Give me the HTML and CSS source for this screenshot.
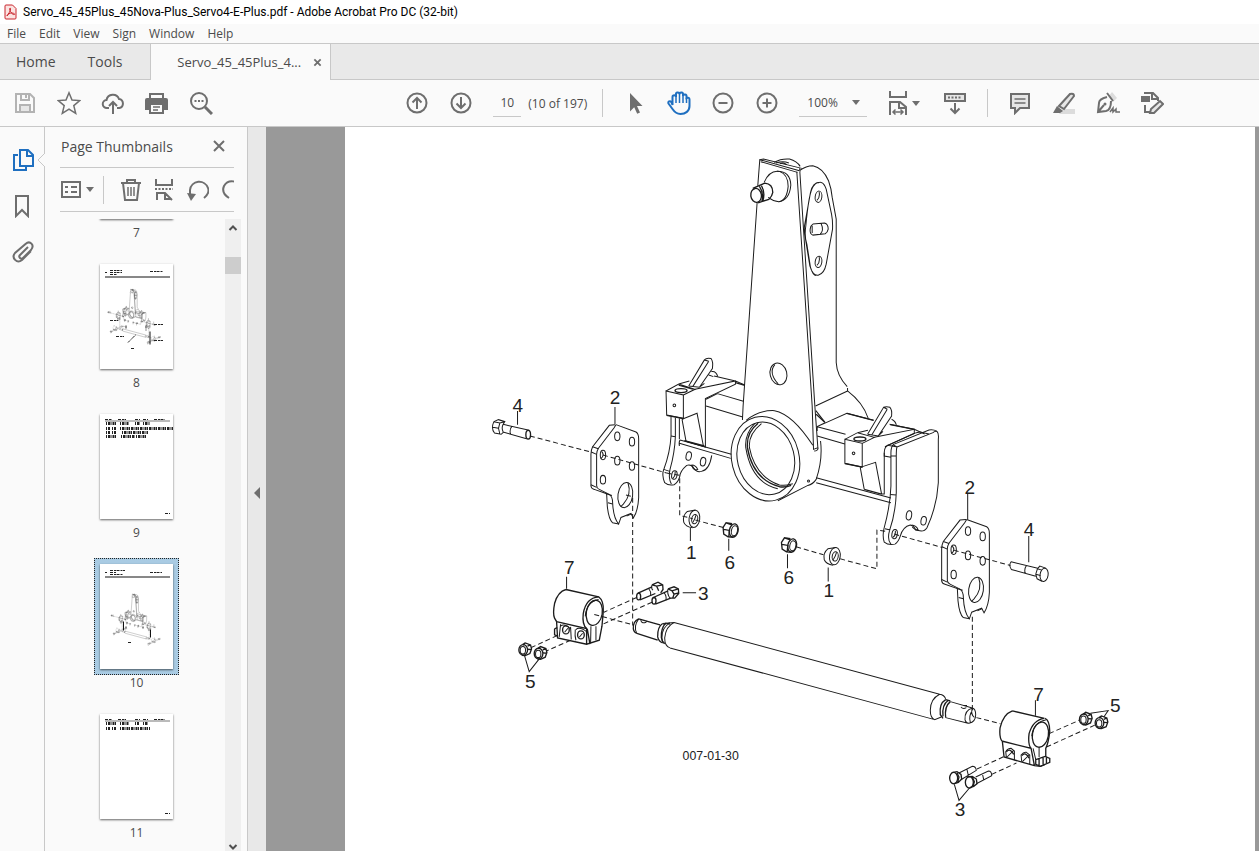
FILE: index.html
```html
<!DOCTYPE html>
<html lang="en">
<head>
  <meta charset="UTF-8">
  <title>Servo_45_45Plus_45Nova-Plus_Servo4-E-Plus.pdf - Adobe Acrobat Pro DC (32-bit)</title>
  <link rel="stylesheet" href="styles.css">
</head>
<body>
  <header class="titlebar">
    <svg class="app-icon" viewBox="0 0 13 16">
      <path class="app-sheet" d="M2 1h6.500l3.500 3.500V14a1 1 0 0 1-1 1H2a1 1 0 0 1-1-1V2a1 1 0 0 1 1-1z"/>
      <path d="M3 12c1-2 4-5 3.500-7.500C6 3 5 5 6.500 7.500S9.500 11 10.500 10.500 9 8.500 6.500 9.200 3.200 11 3 12z"/>
    </svg>
    <span>Servo_45_45Plus_45Nova-Plus_Servo4-E-Plus.pdf - Adobe Acrobat Pro DC (32-bit)</span>
  </header>

  <nav class="menubar">
    <button>File</button>
    <button>Edit</button>
    <button>View</button>
    <button>Sign</button>
    <button>Window</button>
    <button>Help</button>
  </nav>

  <nav class="tabs">
    <button class="tab tab-home">Home</button>
    <button class="tab tab-tools">Tools</button>
    <div class="tab-doc">
      <button class="tab tab-name">Servo_45_45Plus_4...</button>
      <button class="tab-close" aria-label="Close tab">
        <svg viewBox="0 0 10 10"><path d="M1.500 1.500l7 7M8.500 1.500l-7 7"/></svg>
      </button>
    </div>
  </nav>

  <div class="toolbar">
    <div class="group">
      <button class="tool disabled" aria-label="Save">
        <svg viewBox="0 0 24 24"><path d="M3 3h14l4 4v14H3z"/><path d="M8 3v6h8V3M13 4v3"/><path class="tint" d="M7 21v-7h10v7z"/></svg>
      </button>
      <button class="tool" aria-label="Star">
        <svg viewBox="0 0 24 24"><path class="thin" d="M12 1.800l3 7.200 7.800.6-6 5 1.900 7.700-6.700-4.200-6.700 4.200 1.900-7.700-6-5L9 9z"/></svg>
      </button>
      <button class="tool" aria-label="Upload">
        <svg viewBox="0 0 24 24"><path d="M8 17H6a4 4 0 0 1-.5-8 6.500 6.500 0 0 1 12.500-1 4.600 4.600 0 0 1 .5 9H16"/><path d="M12 23V11M8 15l4-4 4 4"/></svg>
      </button>
      <button class="tool" aria-label="Print">
        <svg viewBox="0 0 24 24"><path d="M5 8V3h13v5"/><path class="solid" d="M2 8h19a1 1 0 0 1 1 1v9h-4v-5H5v5H1V9a1 1 0 0 1 1-1z"/><path d="M5 13v9h13v-9"/><path class="thin" d="M8 16h7M8 19h5"/></svg>
      </button>
      <button class="tool" aria-label="Find">
        <svg viewBox="0 0 24 24"><circle cx="10" cy="10" r="8"/><path class="thick" d="M16 16l7 7"/><path class="dots" d="M5.500 10h9"/></svg>
      </button>
    </div>
    <div class="group main-tools">
      <button class="tool" aria-label="Previous page">
        <svg viewBox="0 0 24 24"><circle cx="12" cy="12" r="9.500"/><path d="M12 18V7M7.500 11.500L12 7l4.500 4.500"/></svg>
      </button>
      <button class="tool" aria-label="Next page">
        <svg viewBox="0 0 24 24"><circle cx="12" cy="12" r="9.500"/><path d="M12 6v11M7.500 12.500L12 17l4.500-4.500"/></svg>
      </button>
      <input class="page-number" type="text" value="10" aria-label="Page number">
      <span class="page-count">(10 of 197)</span>
      <span class="divider"></span>
      <button class="tool" aria-label="Select">
        <svg viewBox="0 0 24 24"><path class="solid-only" d="M7 2v18.500l4.200-4.300 3 6.500 2.800-1.300-3-6.400h5.500z"/></svg>
      </button>
      <button class="tool active" aria-label="Hand">
        <svg viewBox="0 0 24 24"><path d="M5.500 14V6a1.700 1.700 0 0 1 3.500 0V3.500a1.700 1.700 0 0 1 3.500-.5 1.700 1.700 0 0 1 3.500.5V5a1.700 1.700 0 0 1 3.500.5V7q3-1 3 1.500V15c0 5-4 8-9 8-4 0-6-2-8-5l-4-5.500c-1-2 1.500-3 2.800-1.500z"/><path class="thin" d="M9 6v6M12.500 3v9M16 5v7M19.500 7v5"/></svg>
      </button>
      <button class="tool" aria-label="Zoom out">
        <svg viewBox="0 0 24 24"><circle cx="12" cy="12" r="9.500"/><path d="M7.500 12h9"/></svg>
      </button>
      <button class="tool" aria-label="Zoom in">
        <svg viewBox="0 0 24 24"><circle cx="12" cy="12" r="9.500"/><path d="M7.500 12h9M12 7.500v9"/></svg>
      </button>
      <label class="zoom">
        <select aria-label="Zoom level"><option>100%</option><option>150%</option></select>
        <svg class="caret" viewBox="0 0 8 5"><path d="M0 0h8L4 5z"/></svg>
      </label>
      <button class="tool with-caret" aria-label="Page width">
        <svg viewBox="0 0 24 24"><path d="M4 0v6h16V0"/><path d="M4 24V11h10l6 5v8M13 11v6h6"/><path class="thin" d="M7 21h10M9.500 18.500L7 21l2.500 2.500M14.500 18.500L17 21l-2.500 2.500"/></svg>
        <svg class="caret" viewBox="0 0 8 5"><path d="M0 0h8L4 5z"/></svg>
      </button>
      <button class="tool" aria-label="Scrolling">
        <svg viewBox="0 0 24 24"><path class="tint" d="M2 3h20v7H2z"/><path class="dots" d="M5 6.500h14"/><path d="M12 12v10M7.500 17.500L12 22l4.500-4.500"/></svg>
      </button>
      <span class="divider"></span>
      <button class="tool" aria-label="Comment">
        <svg viewBox="0 0 24 24"><path class="tint" d="M3 3h18v14h-9l-5 5v-5H3z"/><path class="thin" d="M6.500 8h11M6.500 12h11"/></svg>
      </button>
      <button class="tool" aria-label="Highlight">
        <svg viewBox="0 0 24 24"><path class="shade" d="M10 18h13v5H7z"/><path class="tint" d="M7 15L18 3q4-1 4 2L12 18z"/><path class="solid-only" d="M5 15l6 5-3 2H1z"/></svg>
      </button>
      <button class="tool" aria-label="Sign">
        <svg viewBox="0 0 24 24"><path class="shade" d="M13 5l3-4 5 6-4 4z"/><path d="M11 2l6 8M11 6q-8 2-8 6L2 21l8-1q5-1 5-10M2 21l6-7"/><circle class="solid-only" cx="9" cy="13" r="1.500"/><path class="thin" d="M14 21l3-4v4l3-3v3h4"/></svg>
      </button>
      <button class="tool" aria-label="Edit PDF">
        <svg viewBox="0 0 24 24"><path d="M5 14v7h5M5 3V2h8l5 5v3M12 2v6h6"/><path class="solid" d="M2 6h7v4H2z"/><path class="tint" d="M10 22l1-4 9-8 3 3-9 9z"/></svg>
      </button>
    </div>
  </div>

  <main class="workspace">
    <aside class="rail">
      <button class="rail-button active" aria-label="Page Thumbnails">
        <svg viewBox="0 0 24 24"><path d="M9 2h8l5 5v11H9zM16 2v6h6"/><path d="M7 7H3v15h12v-3"/></svg>
      </button>
      <button class="rail-button" aria-label="Bookmarks">
        <svg viewBox="0 0 24 24"><path d="M5 2h12v20l-6-6-6 6z"/></svg>
      </button>
      <button class="rail-button" aria-label="Attachments">
        <svg viewBox="0 0 24 24"><path d="M17 7l-8 8a1.800 1.800 0 0 0 3 3l8-8c4-5-1-10-5.500-6L4 13c-4 5 2 11 7 7l9-9"/></svg>
      </button>
    </aside>

    <section class="panel">
      <svg class="pointer" viewBox="0 0 8 14"><path class="pointer-fill" d="M8 0L1 7l7 7"/></svg>
      <div class="panel-head">
        <h2>Page Thumbnails</h2>
        <button class="panel-close" aria-label="Close panel">
          <svg viewBox="0 0 12 12"><path d="M1 1l10 10M11 1L1 11"/></svg>
        </button>
      </div>
      <div class="panel-tools">
        <button class="small-tool options" aria-label="Options">
          <svg viewBox="0 0 24 24"><path d="M2 4h18v15H2z"/><path d="M5 9h3M5 14h3M11 9h6M11 14h6"/></svg>
          <svg class="caret" viewBox="0 0 8 5"><path d="M0 0h8L4 5z"/></svg>
        </button>
        <span class="divider"></span>
        <button class="small-tool" aria-label="Delete pages">
          <svg viewBox="0 0 24 24"><path d="M2 5h20M8 5V2h8v3M4 5l2 17h12l2-17"/><path class="thin" d="M9 9v9M12 9v9M15 9v9"/></svg>
        </button>
        <button class="small-tool" aria-label="Split pages">
          <svg viewBox="0 0 24 24"><path d="M4 1v6h16V1"/><path class="dots" d="M3 11h18"/><path d="M5 22v-7h8l7 7M13 15v6h6"/></svg>
        </button>
        <button class="small-tool" aria-label="Rotate left">
          <svg viewBox="0 0 24 24"><path d="M19 20q6-5 4-10a9.300 9.300 0 0 0-18 2v6"/><path class="solid-only" d="M2 15l9 1-5 7z"/></svg>
        </button>
        <button class="small-tool" aria-label="Rotate right">
          <svg viewBox="0 0 24 24"><path d="M11 20q-8-5-5-12a9.300 9.300 0 0 1 17 2v7"/></svg>
        </button>
      </div>
      <div class="panel-body">
        <ul class="thumbs">
          <li>
            <button class="thumb"><svg viewBox="0 0 73 104"></svg></button>
            <span>7</span>
          </li>
          <li>
            <button class="thumb">
              <svg viewBox="0 0 73 104">
                <path class="rule" d="M5 12.500h65"/>
                <path class="scribble" d="M5 8h2M10 6h12M10 8h12M10 10h7M50 7h13"/>
                <use class="mini" href="#lift" x="-5" y="22" width="78" height="62"/>
                <path class="scribble" d="M10 56h8M54 60h9M16 72h8M54 76h9M31 84h4M28 78l8-8M26 61v4M46 61v5"/>
                <path class="rule" d="M50 67v13"/>
              </svg>
            </button>
            <span>8</span>
          </li>
          <li>
            <button class="thumb">
              <svg viewBox="0 0 73 104">
                <path class="hair" d="M5 6.500h65"/>
                <path class="scribble" d="M5 5h7M18 5h8M35 5h5M43 5h5M54 5h11"/>
                <path class="scribble tall" d="M6 9h10M20 9h9M35 9h5M43 9h7M6 14h4M12 14h4M20 14h58M6 18h4M12 18h4M22 18h26M6 22h10M21 22h14M36 22h11"/>
                <path class="scribble" d="M65 99h5"/>
              </svg>
            </button>
            <span>9</span>
          </li>
          <li>
            <button class="thumb selected">
              <svg viewBox="0 0 73 104">
                <path class="rule" d="M5 12.500h65"/>
                <path class="scribble" d="M5 8h2M10 6h15M10 8h6M10 10h13M50 8h12"/>
                <use class="mini" href="#lift" x="-1" y="27" width="73" height="58"/>
                <path class="rule" d="M23.500 57v9M50.500 65v8"/>
                <path class="scribble" d="M28 78h4M26 62v2M43 62v2"/>
              </svg>
            </button>
            <span>10</span>
          </li>
          <li>
            <button class="thumb">
              <svg viewBox="0 0 73 104">
                <path class="hair" d="M5 6.500h65"/>
                <path class="scribble" d="M5 5h7M18 5h8M35 5h5M43 5h5M54 5h11"/>
                <path class="scribble tall" d="M6 9h10M20 9h9M35 9h4M43 9h5M6 14h4M12 14h4M20 14h30"/>
                <path class="scribble" d="M65 99h5"/>
              </svg>
            </button>
            <span>11</span>
          </li>
        </ul>
        <div class="scrollbar">
          <svg class="arrow" viewBox="0 0 16 18"><path d="M4.500 11L8 7.500l3.500 3.500"/></svg>
          <div class="scroll-track"><div class="scroll-thumb"></div></div>
          <svg class="arrow" viewBox="0 0 16 18"><path d="M4.500 12L8 15.500l3.500-3.500"/></svg>
        </div>
      </div>
    </section>

    <button class="collapse" aria-label="Collapse panel">
      <svg viewBox="0 0 6 12"><path d="M6 0v12L0 6z"/></svg>
    </button>

    <section class="document">
      <article class="sheet">
        <svg class="drawing" viewBox="3 3 2727 2172">
          <defs>
            <g id="plate">
              <path d="M408 136L390 138L340 202Q335 212 335 225V320Q336 328 345 330L382 343L384 380Q388 420 400 430L418 434"/>
              <path d="M410 136L470 158Q478 163 478 178V355Q476 395 462 416L455 402L425 414L418 434Q402 415 400 370Q400 352 390 345L360 330Q352 326 352 318V225Q352 215 358 206L404 146L410 136"/>
              <path d="M336 218L352 225M340 202L357 208M335 316L352 324M380 343L398 348M386 370L400 374M442 410L455 404"/>
              <ellipse cx="414" cy="171" rx="8" ry="13"/><ellipse cx="458" cy="187" rx="8" ry="13"/>
              <ellipse cx="371" cy="227" rx="8" ry="14"/><ellipse cx="414" cy="244" rx="8" ry="13"/>
              <ellipse cx="458" cy="260" rx="8" ry="13"/><ellipse cx="371" cy="301" rx="8" ry="13"/>
              <ellipse cx="438" cy="347" rx="22" ry="38" transform="rotate(8 438 347)"/>
              <path d="M446 310Q458 345 432 374L424 382M367 216q10 11-2 22"/>
            </g>
            <g id="spacer">
              <path d="M648 392L624 396Q609 408 613 428Q618 442 640 445"/>
              <ellipse cx="645" cy="418" rx="16" ry="26" transform="rotate(8 645 418)"/>
              <ellipse cx="646" cy="419" rx="9" ry="14" transform="rotate(10 646 419)"/>
              <path d="M650 407q-3 12-10 22"/>
            </g>
            <g id="locknut">
              <path class="bold" d="M758 433L740 430L731 444L733 464L746 472L762 474M740 430L757 436M733 450L750 453L748 472"/>
              <ellipse class="bold" cx="763" cy="453" rx="13" ry="20" transform="rotate(12 763 453)"/>
              <ellipse cx="765" cy="454" rx="9" ry="15" transform="rotate(12 765 454)"/>
            </g>
            <g id="smallnut">
              <path class="bold" d="M12 5L20 0L36 6L39 18L34 32L20 38L10 37M20 0l-6 7M36 6l-9 4M39 20l-12-1"/>
              <ellipse class="bold" cx="14" cy="21" rx="13" ry="16"/><ellipse cx="13" cy="22" rx="8" ry="11"/>
            </g>
          </defs>

          <symbol id="lift" viewBox="0 0 2727 2172">
            <!-- tower -->
            <g transform="translate(885 69)">
              <path d="M353 160L311 770M355 110L361 32L480 65M364 38L474 70M361 32L372 30L487 58"/>
              <path d="M404 40Q425 28 450 30Q472 36 482 52M410 42Q430 34 448 42M422 44q10-6 20 3"/>
              <path d="M472 68L518 770M481 68L526 770M480 58L482 68M480 65Q500 50 520 50Q550 56 567 95Q576 120 578 145L590 210V640Q592 680 623 712"/>
              <path d="M545 100Q520 98 513 130L495 230Q493 250 498 270L511 350Q520 380 536 378Q554 374 560 345L579 240Q580 215 576 195L560 120Q554 102 545 100M539 101Q530 98 521 112Q508 130 499 230Q494 260 502 285L513 355Q521 380 530 379"/>
              <ellipse cx="537" cy="143" rx="10" ry="17" transform="rotate(8 537 143)"/><ellipse cx="537" cy="338" rx="10" ry="17" transform="rotate(8 537 338)"/>
              <path d="M532 154q10-8 7-25M532 349q10-8 7-25"/>
              <path d="M520 225L555 222Q566 225 566 240Q564 250 557 254L520 258Q510 254 512 240Q513 229 520 225M518 230V252M545 224q9 20-3 31"/>
              <path d="M374 100Q390 62 420 67Q446 76 446 112Q442 155 418 158Q402 157 386 145"/>
              <path d="M412 67Q452 66 454 108Q450 154 418 158"/>
              <path class="bold" d="M340 118L376 102Q400 104 400 130Q398 142 388 151L356 161M366 110Q378 130 370 157M360 112q14 20 7 46"/>
              <ellipse class="bold" cx="350" cy="139" rx="16" ry="21" transform="rotate(-8 350 139)"/>
              <ellipse cx="417" cy="674" rx="25" ry="33" transform="rotate(-14 417 674)"/>
              <path d="M406 646Q386 670 416 704"/>
            </g>

            <!-- cross beam, hub and brackets -->
            <g transform="translate(915 639)">
              <path d="M281 200L279 242M488 200L492 330L505 325L496 200M494 335Q505 335 506 325"/>
              <path d="M498 200L594 155M594 146V155Q640 190 656 237M499 214L527 250"/>
              <!-- hub -->
              <ellipse cx="348" cy="358" rx="101" ry="128" transform="rotate(-14 348 358)"/>
              <ellipse cx="349" cy="357" rx="85" ry="110" transform="rotate(-14 349 357)"/>
              <path class="bold" d="M326 252Q290 280 294 325Q310 420 390 442Q408 445 425 438"/>
              <path d="M336 253Q296 285 300 325Q316 410 390 437Q408 440 430 433M316 252Q285 285 289 325Q306 430 385 448"/>
              <path d="M290 243Q330 212 375 214Q430 225 490 318M513 305Q520 360 500 420Q490 435 475 438L385 484"/>
              <circle cx="477" cy="425" r="3"/>
              <!-- left block and lever -->
              <path d="M50 155L102 167V237L52 227ZM50 155L88 134L137 150L102 167M88 134L120 125M88 138L130 150"/>
              <ellipse class="bold" cx="95" cy="154" rx="18" ry="6"/><circle cx="75" cy="198" r="4"/>
              <path d="M118 140L165 62Q172 54 185 58Q192 68 189 88L150 144M130 142L178 66M118 140L150 144L165 132M165 62L178 66M186 97Q200 94 205 112M178 107L192 112"/>
              <path d="M137 150L258 125V135L168 178V323L107 305M194 110L258 125L286 137M102 237L98 240M90 237V300"/>
              <path class="bold" d="M52 228L102 238M105 304L165 320M258 130L286 138"/>
              <path d="M98 240L143 222L162 320M98 240L110 306"/>
              <path d="M204 163L282 186M170 180L204 163M170 200L280 233M92 302L246 345M90 312L244 357M92 302Q88 307 90 320"/>
              <path d="M65 232V290Q62 340 44 388Q36 405 46 430Q58 440 74 436Q86 430 91 412Q92 395 112 378Q126 374 133 386Q142 400 156 396Q180 392 187 348"/>
              <path d="M78 236V292Q76 340 62 390Q56 415 66 434M65 290L78 292M43 390L61 396M126 377Q138 376 145 390L138 392Q130 388 126 377"/>
              <ellipse cx="118" cy="350" rx="8" ry="13" transform="rotate(10 118 350)"/><ellipse cx="161" cy="367" rx="8" ry="13" transform="rotate(10 161 367)"/><ellipse cx="75" cy="407" rx="8" ry="13" transform="rotate(10 75 407)"/>
              <!-- right beam, block and lever -->
              <path d="M503 262L592 222L672 243M503 262L588 285M503 290L586 314M500 415L724 476M500 430L724 490M527 250L503 262V275"/>
              <path d="M586 300L638 312V383L586 372ZM586 300L624 280L674 294L638 312M624 280L655 273"/>
              <ellipse class="bold" cx="631" cy="299" rx="18" ry="6"/><circle cx="612" cy="342" r="4"/>
              <path d="M654 285L702 204Q710 200 721 204Q728 212 726 230L686 290M666 288L713 210M702 204L713 210M654 285L686 290L700 276M726 240Q738 246 740 257"/>
              <path class="bold" d="M586 373L638 383M696 464L644 450M592 222L672 243M500 225L525 248M722 256L794 270"/>
              <path d="M632 384L678 369L696 464M644 450L632 384"/>
              <path d="M674 294L794 270V282L706 322M720 255L794 270L825 284M704 340V464L696 464"/>
              <!-- end plates -->
              <path d="M740 322L714 318Q704 324 704 340V350L724 354M714 318L800 280L812 278M732 315L838 272Q852 270 862 276Q868 282 866 300V430Q862 500 832 565Q826 575 815 575L798 572Q795 560 782 557Q760 562 752 590Q746 608 736 614Q716 618 704 608Q698 590 703 568Q722 500 724 440V340Q724 322 732 315"/>
              <path d="M742 323Q740 330 740 350V460Q738 520 720 573Q712 600 724 614M742 323L850 280Q856 274 862 276M724 350H740M722 465L740 467M706 568L722 572M786 557Q800 558 806 572Q796 572 788 563M730 316L742 323M812 278L838 284"/>
              <ellipse cx="778" cy="528" rx="8" ry="14" transform="rotate(10 778 528)"/><ellipse cx="822" cy="544" rx="8" ry="13" transform="rotate(10 822 544)"/><ellipse cx="735" cy="584" rx="8" ry="14" transform="rotate(10 735 584)"/>
              <path d="M70 418q9-8 7-22M730 594q9-6 7-20"/>
            </g>

            <use href="#plate" x="405" y="759"/>
            <use href="#plate" x="1456" y="1043"/>
            <use href="#spacer" x="405" y="759"/>
            <use href="#spacer" x="826" y="871"/>
            <use href="#locknut" x="405" y="759"/>
            <use href="#locknut" x="580" y="804"/>

            <!-- bolt 4, left -->
            <g transform="translate(405 759)">
              <path d="M44 127L58 121L77 127L72 135M44 127Q35 148 46 161L66 165L74 158M44 127L62 131L77 127M62 131L58 147L62 164M41 144L58 147M72 135Q66 146 72 158M72 135L150 153M74 159L142 178M98 141Q90 150 94 165"/>
              <ellipse class="bold" cx="147" cy="166" rx="7" ry="13"/>
              <path class="dash" d="M152 170L335 218M371 227L562 281"/>
              <path class="dash" d="M562 281L601 288V408L640 418M648 422L735 445M440 347L460 352V510"/>
              <path d="M115 95V136M407 83V134M633 446V485M748 478V514"/>
            </g>
            <!-- bolt 4, right -->
            <g transform="translate(1245 999)">
              <path d="M754 307Q746 318 755 330L828 350M754 307L834 326M800 318Q792 330 797 342M858 326L840 320L833 328L828 344L832 358L848 366M833 328L846 332M828 344L842 348"/>
              <ellipse cx="853" cy="346" rx="12" ry="20" transform="rotate(8 853 346)"/>
              <path class="dash" d="M110 262L192 286M242 298L352 328V212L378 216M404 224L548 264M582 272L752 318M638 472V760"/>
              <path d="M624 104V180M807 230V308M84 284V326M206 324V366"/>
            </g>

            <!-- clamp 7, bolts 3 and nuts 5, left -->
            <g transform="translate(465 1269)">
              <path class="bold" d="M200 120L298 142Q314 154 312 186L308 230M200 120Q176 126 166 162Q160 192 166 206L172 216L175 265L262 284L300 272L308 230M172 216L262 237L262 284M264 238L272 284"/>
              <ellipse class="bold" cx="285" cy="190" rx="24" ry="38" transform="rotate(10 285 190)"/>
              <path class="bold" d="M298 142Q260 145 252 192Q248 225 262 237M166 238L174 234M166 238V256L176 260"/>
              <path d="M298 150Q262 156 258 200M275 230L274 280M290 230V272M184 224L180 262M214 232L216 270M228 240Q226 260 230 272M230 240Q240 230 262 246M184 230Q194 220 214 238"/>
              <ellipse class="bold" cx="200" cy="241" rx="10" ry="12"/><ellipse class="bold" cx="245" cy="256" rx="10" ry="12"/>
              <path d="M196 248l10-12M240 263l10-12"/>
              <path class="bold" d="M416 131L458 112M422 151L468 132M458 106L476 98L490 106L491 120L484 130M458 106L472 110L490 106M472 110L478 124"/>
              <path class="bold" d="M462 144L506 124M468 164L514 146M506 118L524 112L537 118L538 132L526 146L512 146M506 118L518 124L537 118M518 124L524 134L520 146M524 134L538 130"/>
              <ellipse class="bold" cx="418" cy="141" rx="6" ry="10"/><ellipse class="bold" cx="464" cy="154" rx="6" ry="10"/>
              <path d="M448 117q8 10 6 20M494 130q8 8 6 22M506 118q-4 14 6 28M458 106q-3 12 3 16"/>
              <path class="dash" d="M412 144L314 188M458 158L306 226M285 195L402 226M174 258L96 294M214 272L142 304M400 0V228"/>
              <path d="M202 82V118M550 130H590M76 318L90 366L120 328"/>
              <use href="#smallnut" x="58" y="280"/><use href="#smallnut" x="104" y="291"/>
              <!-- shaft end -->
              <path class="bold" d="M418 208Q400 216 402 238Q404 250 415 252L475 272M418 208L482 226M490 222Q474 232 475 262Q478 276 490 280M500 220Q484 236 486 264Q488 276 496 282"/>
              <path d="M418 208Q402 230 412 250M424 210q2 14 16 8l2-4M490 222L525 219M500 220L512 224"/>
            </g>

            <!-- shaft -->
            <g transform="translate(885 1419)">
              <path d="M104 69L900 284M92 145L885 360M104 69Q80 80 76 115Q76 140 92 145M92 70Q68 84 68 112Q66 128 76 133M72 75L92 70M900 284Q872 298 872 332Q872 356 885 360L905 352M900 284Q914 286 918 298"/>
              <path class="bold" d="M918 300Q898 312 902 345L910 356M926 302Q906 316 910 350M932 306Q914 320 918 354M918 300L932 304"/>
              <path d="M932 306L998 325M918 354L985 371M998 325Q974 332 976 360Q978 370 988 371Q1008 366 1008 345Q1008 328 998 325M998 332Q986 350 992 368M964 322q6 8 16 2M968 318h14M998 325q-6 20 6 28"/>
            </g>

            <!-- clamp 7, bolts 3 and nuts 5, right -->
            <g transform="translate(1725 1629)">
              <path class="bold" d="M278 124L374 146M278 124Q250 134 241 175Q238 205 248 216L253 262L344 288L362 290L376 284M246 214L334 236L344 288M376 146Q390 152 390 186Q386 220 378 236V262M374 146Q340 150 328 192Q324 225 334 236"/>
              <ellipse class="bold" cx="362" cy="195" rx="24" ry="38" transform="rotate(10 362 195)"/>
              <path d="M378 151Q340 158 336 200M340 236L348 270M358 234V262M260 264L258 246Q264 236 274 236L284 244V272M306 276L304 256Q312 246 320 248L330 256V284M262 262l20-20M308 276l20-20"/>
              <path class="bold" d="M348 270L376 260L390 266V278L362 290L348 284ZM358 268V288M370 264V284M380 262V280M260 246q12-12 22 8M306 258q12-14 22 8"/>
              <path class="bold" d="M96 309L112 306L124 314L126 328L116 338L104 342M112 310L118 322L114 338M142 322L158 320L170 328L172 342L162 350L150 354M158 322L164 336L160 350"/>
              <ellipse class="bold" cx="102" cy="325" rx="12" ry="17"/><ellipse class="bold" cx="149" cy="338" rx="12" ry="17"/>
              <path d="M118 310L158 290Q168 290 170 302L124 330M168 322L206 304Q216 304 216 318L170 342M142 300l4 18M188 312l4 18"/>
              <path class="dash" d="M172 298L254 260M216 314L290 280M388 192L478 152M380 232L526 166M170 144L242 162"/>
              <path d="M347 92V138M104 344L118 392L150 354M512 131L565 123L552 142"/>
              <use href="#smallnut" x="478" y="128"/><use href="#smallnut" x="525" y="139"/>
            </g>
          </symbol>
          <use href="#lift" width="2727" height="2172"/>

          <g class="callouts">
            <text x="521" y="856">4</text>
            <text x="812" y="834">2</text>
            <text x="1041" y="1299">1</text>
            <text x="1156" y="1329">6</text>
            <text x="675" y="1344">7</text>
            <text x="1077" y="1420">3</text>
            <text x="558" y="1683">5</text>
            <text x="1333" y="1373">6</text>
            <text x="1453" y="1413">1</text>
            <text x="1875" y="1102">2</text>
            <text x="2053" y="1228">4</text>
            <text x="2081" y="1722">7</text>
            <text x="2311" y="1755">5</text>
            <text x="1846" y="2069">3</text>
            <text class="figure-number" x="1099" y="1899">007-01-30</text>
          </g>
        </svg>
      </article>
    </section>
  </main>
</body>
</html>
```
FILE: styles.css
```css
* {
  box-sizing: border-box;
}

body {
  margin: 0;
  height: 100vh;
  display: flex;
  flex-direction: column;
  overflow: hidden;
  background: #fafafa;
  color: #4b4b4b;
  font-family: "Open Sans", "Noto Sans", sans-serif;
  font-size: 12px;
}

button,
input,
select {
  font: inherit;
  color: inherit;
  border: 0;
  margin: 0;
  padding: 0;
  background: none;
}

svg {
  display: block;
  fill: none;
  stroke: #6e6e6e;
  stroke-width: 2;
}

/* title and menu */
.titlebar {
  height: 24px;
  padding-left: 4px;
  display: flex;
  align-items: center;
  gap: 6px;
  background: #fff;
  color: #000;
  font-family: Roboto, "Open Sans", sans-serif;
  white-space: nowrap;
}

.app-icon {
  width: 13px;
  height: 16px;
  stroke: #c9252d;
  stroke-width: 1;
}

.app-sheet {
  fill: #fbe3e1;
}

.menubar {
  height: 19px;
  padding-left: 7px;
  display: flex;
  align-items: center;
  gap: 13px;
}

/* tabs */
.tabs {
  height: 37px;
  display: flex;
  background: #e9e9e9;
  border-top: 1px solid #c8c8c8;
  border-bottom: 1px solid #c8c8c8;
  font-size: 14px;
}

.tab-home {
  padding: 0 16px;
}

.tab-tools {
  padding: 0 28px 0 16px;
}

.tab-doc {
  width: 181px;
  margin-bottom: -1px;
  padding: 0 8px 0 26px;
  display: flex;
  align-items: center;
  justify-content: space-between;
  background: #fafafa;
  border-left: 1px solid #c8c8c8;
  border-right: 1px solid #c8c8c8;
}

.tab-name {
  font-size: 13px;
}

.tab-close svg {
  width: 9px;
  height: 9px;
}

/* toolbar */
.toolbar {
  height: 47px;
  padding-left: 3px;
  display: flex;
  border-bottom: 1px solid #c8c8c8;
}

.toolbar::after {
  content: "";
  flex: 1;
}

.group {
  display: flex;
  align-items: center;
}

.main-tools {
  flex: none;
}

.toolbar .group:first-child {
  flex: 2 0 223px;
}

.tool {
  width: 44px;
  height: 44px;
  flex: none;
  display: flex;
  align-items: center;
  justify-content: center;
}

.tool svg {
  width: 24px;
  height: 24px;
}

.disabled svg {
  stroke: #b3b3b3;
}

.active svg {
  stroke: #1f6fc0;
}

svg .thin {
  stroke-width: 1.500;
}

svg .thick {
  stroke-width: 3;
}

svg .dots {
  stroke-dasharray: 2 1.500;
}

svg .solid {
  fill: #6e6e6e;
}

svg .solid-only {
  fill: #6e6e6e;
  stroke: none;
}

svg .tint {
  fill: #e6e6e6;
}

svg .shade {
  fill: #dcdcdc;
  stroke: none;
}

.toolbar .caret,
.panel-tools .caret {
  width: 8px;
  height: 5px;
  fill: #6e6e6e;
  stroke: none;
}

.page-number {
  width: 28px;
  height: 28px;
  margin: 0 7px 0 10px;
  border-bottom: 1px solid #c8c8c8;
  text-align: center;
  font-size: 12px;
}

.page-count {
  width: 74px;
  white-space: nowrap;
}

.divider {
  width: 1px;
  height: 28px;
  margin-right: 10px;
  background: #c8c8c8;
}

.zoom {
  width: 68px;
  height: 28px;
  margin: 0 10px;
  padding: 0 7px 0 8px;
  display: flex;
  align-items: center;
  justify-content: space-between;
  border-bottom: 1px solid #c8c8c8;
}

.zoom select {
  appearance: none;
}

.with-caret {
  gap: 2px;
  margin: 0 8px 0 4px;
}

.tool + .divider {
  margin-left: 10px;
}

/* workspace */
.workspace {
  flex: 1;
  min-height: 0;
  display: flex;
}

.rail {
  width: 45px;
  padding: 21px 0 0 2px;
  display: flex;
  flex-direction: column;
  align-items: center;
  gap: 22px;
  border-right: 1px solid #c8c8c8;
}

.rail-button svg {
  width: 24px;
  height: 24px;
}

.panel {
  position: relative;
  width: 203px;
  padding: 0 6px 0 15px;
  display: flex;
  flex-direction: column;
  border-right: 1px solid #c8c8c8;
}

/* notch that points at the open panel's button */
.pointer {
  position: absolute;
  left: -8px;
  top: 26px;
  width: 8px;
  height: 14px;
  stroke: #c8c8c8;
  stroke-width: 1;
}

.pointer-fill {
  fill: #fafafa;
}

.panel-head {
  height: 41px;
  margin-right: 7px;
  padding: 0 9px 2px 1px;
  display: flex;
  align-items: center;
  justify-content: space-between;
  border-bottom: 1px solid #c8c8c8;
}

.panel-head h2 {
  margin: 0;
  font-size: 14px;
  font-weight: normal;
}

.panel-close svg {
  width: 12px;
  height: 12px;
}

.panel-tools {
  height: 44px;
  margin-right: 7px;
  display: flex;
  align-items: center;
  gap: 9px;
  overflow: hidden;
  border-bottom: 1px solid #c8c8c8;
}

.panel-tools .divider {
  flex: none;
  margin-right: 6px;
}

.small-tool {
  flex: none;
  display: flex;
  align-items: center;
  gap: 2px;
}

.small-tool svg {
  width: 24px;
  height: 24px;
}

.panel-body {
  flex: 1;
  min-height: 0;
  margin-top: 7px;
  display: flex;
  justify-content: space-between;
  overflow: hidden;
}

/* list scrolled part of the way down */
.thumbs {
  flex: 1;
  margin: -111px 0 0;
  padding: 0 12px 0 0;
  list-style: none;
}

.thumbs li {
  margin-bottom: 17px;
  display: flex;
  flex-direction: column;
  align-items: center;
  line-height: 16px;
}

.thumb {
  padding: 5px;
  border: 1px solid transparent;
}

.thumb svg {
  width: 73px;
  height: 105px;
  background: #fff;
  box-shadow: 0 1px 2px rgba(0, 0, 0, 0.6);
}

.selected {
  background: #a9cbe3;
  border: 1px dotted #222;
}

.thumb .rule {
  stroke: #111;
  stroke-width: 1;
}

.thumb .hair {
  stroke: #777;
  stroke-width: 1;
}

.thumb .scribble {
  stroke: #222;
  stroke-width: 1;
  stroke-dasharray: 3 1 2 0.500;
}

.thumb .tall {
  stroke-width: 3;
  stroke-dasharray: 1 1 2 0.500;
}

.thumb .mini {
  stroke: #333;
  stroke-width: 9;
}

.scrollbar {
  width: 16px;
  display: flex;
  flex-direction: column;
  background: #efefef;
}

.arrow {
  width: 16px;
  height: 18px;
  stroke: #505050;
}

.scroll-track {
  flex: 1;
  padding-top: 20px;
}

.scroll-thumb {
  height: 17px;
  background: #cdcdcd;
}

.collapse {
  width: 18px;
  padding-top: 8px;
  display: flex;
  align-items: center;
  justify-content: center;
  background: #e8e8e8;
}

.collapse svg {
  width: 6px;
  height: 12px;
  fill: #6e6e6e;
  stroke: none;
}

/* document */
.document {
  flex: 1;
  min-width: 0;
  padding: 0 4px 0 79px;
  background: #999;
  overflow: hidden;
}

.sheet {
  min-height: 100%;
  background: #fff;
}

.drawing {
  width: 100%;
  stroke: #1c1c1c;
  stroke-width: 3;
}

.drawing .bold {
  stroke-width: 4;
}

.dash {
  stroke-dasharray: 15 9;
}

.callouts {
  fill: #222;
  stroke: none;
  font-family: "Liberation Sans", Arial, sans-serif;
  font-size: 57px;
  text-anchor: middle;
}

.callouts .figure-number {
  font-size: 37px;
}
```
